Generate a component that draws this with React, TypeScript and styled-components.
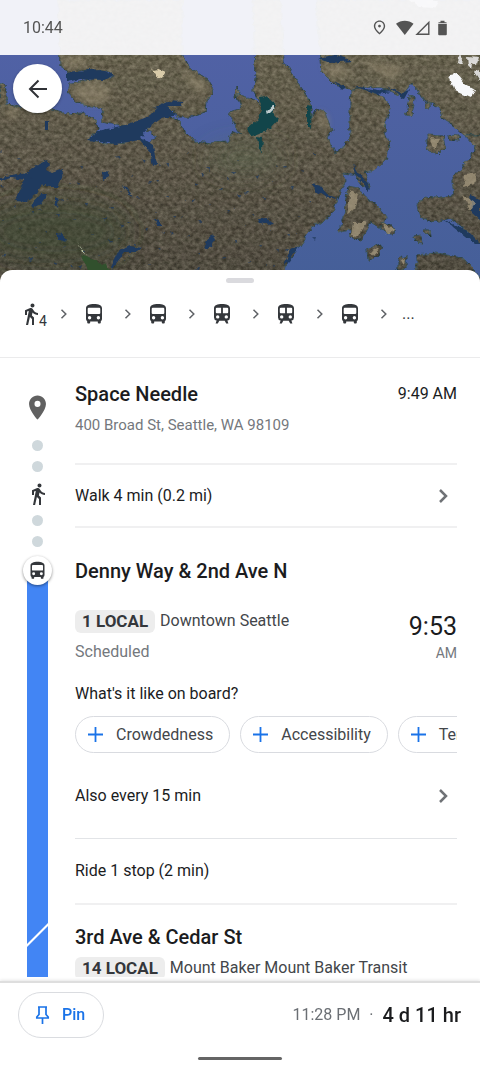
import React from "react";
import styled, { createGlobalStyle } from "styled-components";
import { MdDirectionsWalk, MdPlace, MdOutlinePlace } from "react-icons/md";

const GlobalStyle = createGlobalStyle`
  *, *::before, *::after { box-sizing: border-box; }
  body {
    margin: 0;
    background: #fff;
    color: #1b1c1e;
    font-family: Roboto, "Liberation Sans", sans-serif;
    font-size: 16px;
    line-height: 24px;
  }
  h1, h2, p, ol, ul { margin: 0; padding: 0; list-style: none; font-weight: 400; }
  button { font: inherit; color: inherit; margin: 0; padding: 0; border: 0; background: none; cursor: pointer; }
  svg { display: block; flex: none; }
`;

const Screen = styled.div`
  display: flex;
  flex-direction: column;
  height: 100vh;
  overflow: hidden;
`;

const MapHeader = styled.header`
  position: relative;
  flex: none;
  height: 282px;
  margin-bottom: -12px;
  background: #4c6099;
`;

const MapImage = styled.svg`
  position: absolute;
  inset: 0;
  width: 100%;
  height: 100%;
`;

const StatusBar = styled.div`
  position: relative;
  display: flex;
  align-items: center;
  justify-content: space-between;
  height: 55px;
  padding: 0 30px 0 23px;
  background: rgba(250, 250, 252, 0.95);
  color: #545454;
`;

const StatusIcons = styled.div`
  display: flex;
  align-items: center;
  gap: 8px;
`;

const BackButton = styled.button`
  position: relative;
  display: grid;
  place-items: center;
  width: 49px;
  height: 49px;
  margin: 9px 0 0 13px;
  border-radius: 50%;
  background: #fff;
  color: #303236;
  box-shadow: 0 1px 3px rgba(0, 0, 0, 0.3);
`;

const Sheet = styled.main`
  position: relative;
  display: flex;
  flex-direction: column;
  flex: 1;
  min-height: 0;
  padding-bottom: 4px;
  border-radius: 12px 12px 0 0;
  background: #fff;
`;

const Handle = styled.div`
  flex: none;
  width: 28px;
  height: 5px;
  margin: 8px auto 0;
  border-radius: 3px;
  background: #dadade;
`;

const Steps = styled.ol`
  display: flex;
  flex: none;
  align-items: center;
  height: 75px;
  padding: 0 19px 12px;
  border-bottom: 1px solid #ebebec;
  color: #34373b;
`;

const Step = styled.li`
  display: flex;
  align-items: center;
  justify-content: space-between;
  width: 64px;
  padding-right: 14px;

  &:first-child { width: 63px; }
`;

const WalkStep = styled.span`
  display: flex;
  align-items: flex-end;
  font-size: 14px;
  line-height: 10px;

  svg { margin-right: -4px; }
`;

const Itinerary = styled.div`
  flex: 1;
  min-height: 0;
  overflow-y: auto;
  scrollbar-width: none;
`;

const Leg = styled.section`
  display: grid;
  grid-template-columns: 75px minmax(0, 1fr);
  padding-right: 23px;
`;

const Rail = styled.div<{ $top: number }>`
  display: flex;
  flex-direction: column;
  align-items: center;
  padding-top: ${(p) => p.$top}px;
  color: #34373b;
`;

const PlaceMark = styled.div`
  height: 47px;
  color: #616161;
`;

const Dots = styled.div`
  display: flex;
  flex-direction: column;
  gap: 10px;

  &::before, &::after {
    content: "";
    width: 11px;
    height: 11px;
    border-radius: 50%;
    background: #cfd8dc;
  }
`;

const WalkMark = styled.div`
  padding: 10px 0 9px;
`;

const StopBadge = styled.div`
  position: relative;
  z-index: 1;
  display: grid;
  place-items: center;
  width: 29px;
  height: 29px;
  border-radius: 50%;
  background: #fff;
  box-shadow: 0 1px 3px rgba(0, 0, 0, 0.45);
`;

const RouteLine = styled.div`
  flex: 1;
  width: 21px;
  margin-top: -8px;
  background: #4285f4;
`;

const LineBreak = styled.svg`
  width: 21px;
  height: 24px;
  fill: #4285f4;
`;

const LineEnd = styled.div`
  width: 21px;
  height: 54px;
  background: #4285f4;
`;

const Row = styled.div<{ $height: number; $thin?: boolean }>`
  display: flex;
  align-items: center;
  justify-content: space-between;
  width: 100%;
  height: ${(p) => p.$height}px;
  border-bottom: ${(p) => (p.$thin ? "1px solid #e2e4e7" : "2px solid #f0f0f1")};
`;

const RowButton = styled(Row).attrs({ as: "button", type: "button" })`
  padding-right: 8px;
  text-align: left;
`;

const Origin = styled.div`
  height: 107px;
  padding-top: 22px;
  border-bottom: 2px solid #f0f0f1;
`;

const Line = styled.div`
  display: flex;
  align-items: center;
  justify-content: space-between;
`;

const PlaceName = styled.h2`
  font-size: 20px;
  line-height: 28px;
  font-weight: 500;
`;

const StopHeading = styled(PlaceName)`
  padding-top: 10px;
`;

const Address = styled.p`
  margin-top: 5px;
  font-size: 15px;
  color: #74787d;
`;

const Departure = styled.div`
  display: flex;
  justify-content: space-between;
  padding-top: 24px;
`;

const Service = styled.p`
  display: flex;
  align-items: center;
  gap: 5px;
  color: #43464a;
`;

const RouteTag = styled.strong`
  padding: 0 7px;
  border-radius: 6px;
  background: #ededed;
  color: #34373b;
  font-size: 17px;
  font-weight: 700;
  line-height: 23px;
`;

const Muted = styled.p`
  margin-top: 7px;
  color: #74787d;
`;

const Clock = styled.div`
  padding-top: 4px;
  text-align: right;
  color: #74787d;
  font-size: 14px;
`;

const ClockTime = styled.div`
  color: #1b1c1e;
  font-size: 25px;
  line-height: 28px;
`;

const Question = styled.p`
  margin-top: 17px;
`;

const Chips = styled.ul`
  display: flex;
  gap: 10px;
  margin-top: 10px;
  overflow: hidden;
`;

const Chip = styled.button`
  display: flex;
  align-items: center;
  gap: 12px;
  height: 37px;
  padding: 0 16px 0 11px;
  border: 1px solid #d9dbe0;
  border-radius: 19px;
  color: #43464a;
  white-space: nowrap;
`;

const NextStop = styled.div`
  height: 96px;
  padding-top: 18px;

  ${Service} { margin-top: 5px; }
`;

const Footer = styled.footer`
  position: relative;
  flex: none;
  padding: 9px 19px 0 18px;
  background: #fff;
  border-top: 2px solid #dedede;
  box-shadow: 0 -1px 3px rgba(0, 0, 0, 0.1);
`;

const PinButton = styled.button`
  display: flex;
  align-items: center;
  gap: 11px;
  height: 46px;
  padding: 0 18px 0 15px;
  border: 1px solid #dadce0;
  border-radius: 23px;
  color: #1a73e8;
  font-weight: 500;
`;

const Arrival = styled.p`
  display: flex;
  align-items: center;
  gap: 9px;
  color: #6b6f74;
`;

const Duration = styled.strong`
  color: #1b1c1e;
  font-size: 20px;
  font-weight: 500;
`;

const HomeBar = styled.div`
  width: 84px;
  height: 3px;
  margin: 19px auto 7px;
  border-radius: 2px;
  background: #656565;
`;

type IconProps = { size: number };

const BusIcon = ({ size }: IconProps) => (
  <svg width={size} height={size} viewBox="0 0 24 24" fill="currentColor" fillRule="evenodd" aria-hidden="true">
    <path d="M4 6.300C4 3.300 7.500 2 12 2s8 1.300 8 4.300V17q0 1.500-1.200 2.300v1.200q0 1-1 1h-1q-1 0-1-1v-1H8.200v1q0 1-1 1h-1q-1 0-1-1v-1.200Q4 18.500 4 17zM5.700 6.900V11q0 1.100 1.100 1.100h10.400q1.100 0 1.100-1.100V6.900q0-1.100-1.100-1.100H6.800q-1.100 0-1.100 1.100zM7.600 14a1.700 1.700 0 1 0 0 3.400 1.700 1.700 0 0 0 0-3.400zM16.400 14a1.700 1.700 0 1 0 0 3.400 1.700 1.700 0 0 0 0-3.400z" />
  </svg>
);

const TrainIcon = ({ size }: IconProps) => (
  <svg width={size} height={size} viewBox="0 0 24 24" fill="currentColor" fillRule="evenodd" aria-hidden="true">
    <path d="M4 6.300C4 3.300 7.500 2 12 2s8 1.300 8 4.300V15.500q0 2.600-2.600 3.100l1 2.900h-2.200l-1.500-2.800H9.300l-1.500 2.800H5.600l1-2.900Q4 18.100 4 15.500zM5.800 6.700v3.600q0 1 1 1h4.300V5.700H6.800q-1 0-1 1zM12.900 5.700v5.600h4.300q1 0 1-1V6.700q0-1-1-1zM7.700 13.200a1.700 1.700 0 1 0 0 3.400 1.700 1.700 0 0 0 0-3.400zM16.300 13.200a1.700 1.700 0 1 0 0 3.400 1.700 1.700 0 0 0 0-3.400z" />
  </svg>
);

const SmallChevron = () => (
  <svg width="8" height="12" viewBox="0 0 8 12" fill="none" stroke="#5f6266" strokeWidth="1.5" aria-hidden="true">
    <path d="M1.500 1.800 5.800 6l-4.300 4.200" />
  </svg>
);

const Chevron = () => (
  <svg width="12" height="16" viewBox="0 0 12 16" fill="none" stroke="#6f7276" strokeWidth="2.5" aria-hidden="true">
    <path d="m3 2 6 6-6 6" />
  </svg>
);

const Plus = () => (
  <svg width="17" height="17" viewBox="0 0 17 17" fill="none" stroke="#1a73e8" strokeWidth="1.8" aria-hidden="true">
    <path d="M8.500 1v15M1 8.500h15" />
  </svg>
);

const PushPin = () => (
  <svg width="17" height="20" viewBox="0 0 17 20" fill="none" stroke="currentColor" strokeWidth="1.7" aria-hidden="true">
    <path d="M4 2h9M5 2v7.500L2.800 12v1h11.400v-1L12 9.500V2M8.500 13v6" />
  </svg>
);

const ArrowBack = () => (
  <svg width="24" height="24" viewBox="0 0 24 24" fill="none" stroke="currentColor" strokeWidth="2" aria-hidden="true">
    <path d="M21 12H4.500M12.500 3.500 4 12l8.500 8.500" />
  </svg>
);

const Connectivity = () => (
  <svg width="54" height="16" viewBox="0 0 54 16" fill="#545454" aria-hidden="true">
    <path d="M0 3.800C5-.4 12.500-.4 17.500 3.800L8.800 15z" />
    <path d="M32.800 2.400v11.900H21z" fill="none" stroke="#545454" strokeWidth="1.400" />
    <path d="M44.500.8h4v1.400h1.300q1 0 1 .8H42.200q0-.8 1-.8h1.300zM42.200 3.800h8.600v10.400q0 1-1 1h-6.600q-1 0-1-1z" />
  </svg>
);

const lakes: string[] = [
  "M0 178 12 176 27 173 40 163 47 160 50 164 46 170 52 173 63 169 62 178 57 187 49 187 42 184 37 193 31 198 27 202 14 201 22 187 24 180 12 178 0 181z",
  "M31 205 41 194 47 194 40 204 33 208z",
  "M57 233 62 234 67 240 64 243 57 239z",
  "M111 267 119 251 130 246 142 248 137 252 125 252 118 261 112 269z",
  "M102 173 108 171 108 177 103 180z",
  "M122 185 126 187 134 198 130 195z",
  "M204 243 213 235 215 240 212 247 206 249z",
  "M312 184 320 186 328 195 338 198 327 198 317 192z",
  "M258 219 267 218 274 223 266 224 260 223z",
  "M55 197 59 199 58 207 55 203z",
  "M154 151 157 164 153 166 151 158z",
  "M153 218 158 220 163 226 157 226z",
  "M45 122 48 122 48 130 45 130z",
  "M153 108 168 101 184 102 181 106 166 106z",
];

const speckles = Array.from({ length: 110 }, (_, i) => ({
  x: (i * 97 + (i % 7) * 31) % 320,
  y: 152 + ((i * 53 + (i % 5) * 17) % 116),
  w: 1 + (i % 3),
}));

const SatelliteMap = () => (
  <MapImage viewBox="0 0 480 282" preserveAspectRatio="xMidYMin slice" role="img" aria-label="Satellite map">
    <defs>
      <linearGradient id="sea" x1="0" y1="0" x2="0" y2="1">
        <stop offset="0" stopColor="#5362a8" />
        <stop offset="1" stopColor="#455f98" />
      </linearGradient>
      <linearGradient id="ground" gradientUnits="userSpaceOnUse" x1="0" y1="40" x2="0" y2="270">
        <stop offset="0" stopColor="#6b6651" />
        <stop offset="0.450" stopColor="#5e584a" />
        <stop offset="1" stopColor="#4c473e" />
      </linearGradient>
      <filter id="terrain" x="0" y="0" width="480" height="282" filterUnits="userSpaceOnUse" colorInterpolationFilters="sRGB">
        <feTurbulence type="fractalNoise" baseFrequency="0.150" numOctaves="3" seed="8" result="coast" />
        <feDisplacementMap in="SourceGraphic" in2="coast" scale="6" xChannelSelector="R" yChannelSelector="G" result="land" />
        <feTurbulence type="fractalNoise" baseFrequency="0.220 0.260" numOctaves="4" seed="21" result="noise" />
        <feColorMatrix in="noise" type="matrix" values="1.100 0 0 0 -0.180  1.050 0.050 0 0 -0.200  1 0 0 0 -0.220  0 0 0 0 0.280" result="grain" />
        <feComposite in="grain" in2="land" operator="in" result="texture" />
        <feMerge>
          <feMergeNode in="land" />
          <feMergeNode in="texture" />
        </feMerge>
      </filter>
      <filter id="rugged" x="0" y="0" width="480" height="282" filterUnits="userSpaceOnUse" colorInterpolationFilters="sRGB">
        <feTurbulence type="fractalNoise" baseFrequency="0.150" numOctaves="3" seed="5" />
        <feDisplacementMap in="SourceGraphic" scale="5" xChannelSelector="R" yChannelSelector="G" />
      </filter>
      <filter id="soft" x="-50%" y="-50%" width="200%" height="200%">
        <feGaussianBlur stdDeviation="12" />
      </filter>
      <filter id="hills" x="-20%" y="-20%" width="140%" height="140%">
        <feGaussianBlur stdDeviation="3" />
      </filter>
    </defs>
    <rect width="480" height="282" fill="url(#sea)" />

    <g filter="url(#terrain)" fill="url(#ground)" stroke="#2c4a50" strokeWidth="1">
      <path d="M58 0H182V55L190 68 207 79 214 91 206 101 205 113 193 117 178 117 164 105 152 118 136 124 120 126 103 122 101 110 92 107 77 103 68 93 70 83 95 78 115 77 108 71 90 71 70 73 60 66z" />
      <path d="M0 82 5 85 7 97 5 104 20 107 36 113 50 109 66 114 82 113 96 120 98 129 89 139 105 144 125 142 136 137 148 144 156 137 146 130 148 122 164 115 178 120 185 133 195 141 212 143 228 142 233 132 241 134 233 121 228 112 242 109 236 94 255 100 260 105 254 91 255 78 253 0H280L284 61 293 76 305 93 312 108 311 118 316 108 326 113 332 130 328 138 335 153 343 148 350 135 350 105 351 91 364 88 379 95 391 106 386 118 385 133 390 146 386 160 375 170 365 172 370 188 362 185 353 174 342 173 346 180 338 199 330 217 313 226 304 240 286 265 278 290H-10z" />
      <path d="M316 0H490V135L477 135 462 134 454 127 442 118 440 108 423 99 412 82 402 96 388 90 368 87 352 90 335 85 322 72z" />
      <path d="M465 135H490V250L478 243 466 230 451 218 433 222 420 217 417 206 423 197 435 198 454 195 452 180 460 170 472 156 475 146z" />
      <path d="M348 186 358 188 364 196 377 206 386 218 383 229 371 222 366 232 360 240 350 237 349 229 338 232 344 217 345 204z" />
      <path d="M382 222 397 229 393 235 381 230z M367 249 382 244 379 256 368 260z M398 259 406 256 406 268 398 270z M417 255 436 253 463 258 481 278V290H417z M414 236 422 235 423 243 416 242z M423 230 429 230 430 237z M427 135 443 136 445 147 437 155 427 149z M448 135 458 136 459 141 449 140z M409 96 415 98 412 114 406 115z M425 102 430 103 430 109 425 108z M236 86 240 93 235 99z" />
    </g>

    <g filter="url(#soft)">
      <ellipse cx="55" cy="232" rx="75" ry="32" fill="#34482f" opacity="0.450" />
      <ellipse cx="245" cy="158" rx="38" ry="14" fill="#5c6e54" opacity="0.400" />
    </g>
    <g filter="url(#hills)" fill="#a3967b" opacity="0.450">
      <path d="M72 87 95 81 112 90 104 103 90 105 78 98z M62 57 92 58 80 66 64 66z M180 70 205 82 205 94 192 88z M322 64 342 66 352 76 330 77z M360 60 405 68 390 80z M320 110 328 117 328 132 320 125z M3 108 20 108 12 120z" />
    </g>

    <g filter="url(#rugged)">
      <g fill="#1f3a5e">
        <path d="M67 72 100 69 116 76 103 80 80 79 67 82z" />
        <path d="M98 131 125 125 150 116 163 102 177 115 162 118 148 128 140 137 153 145 155 159 148 150 140 140 115 144 88 140z" />
        {lakes.map((d) => (
          <path key={d} d={d} />
        ))}
        {speckles.map((s, i) => (
          <path key={i} d={`M${s.x} ${s.y}h${s.w + 1}l-1 ${s.w}z`} opacity="0.700" />
        ))}
        <path d="M318 58 335 55 352 61 330 63z M334 81 346 87 342 90z M352 86 378 90 391 92 378 94z M387 86 401 93 409 90 404 99z M359 174 371 188 368 191 360 180z M353 163 362 180 357 178z M443 220 465 229 480 244 475 244 452 226z M470 194 480 200V220L472 213z M284 265 290 250 299 246 289 261z" />
      </g>
      <g fill="#12454a">
        <path d="M259 97 266 96 277 104 272 112 279 118 270 128 260 134 252 137 247 130 258 120 262 110z M307 105 312 106 311 129 307 126z M257 137 263 138 262 152 259 150z" />
      </g>
      <g fill="#a99d82" opacity="0.700">
        <path d="M351 190 358 194 355 207 347 215z M353 222 366 222 358 237 351 236z M383 224 396 230 387 234z M370 253 380 247 375 257z M400 260 404 258 403 266z M463 195 475 203 470 211z M465 175 477 173 475 184 463 187z M430 138 440 139 434 151z" />
      </g>
      <path d="M80 255 88 258 106 264 111 274 91 274z" fill="#31502d" />
    </g>

    <g fill="#f7f8fa" filter="url(#rugged)">
      <path d="M449 75 457 74 465 84 475 90 471 98 455 91z" />
      <path d="M459 56 463 58 462 65 458 63z M467 56 479 57 477 64 472 62 471 70 468 65z M474 72 480 70V81z M410 0H439L434 8 419 7z" opacity="0.800" />
      <path d="M266 111 274 104 275 107 267 115z" opacity="0.750" />
      <path d="M149 68 153 70 158 69 160 71 165 73 162 78 156 77 157 73z" fill="#d9cba9" />
      <path d="M77 242 80 248 86 255 81 252z" fill="#b9c3a3" />
    </g>
  </MapImage>
);

const steps = [
  { label: "Bus", Icon: BusIcon },
  { label: "Bus", Icon: BusIcon },
  { label: "Train", Icon: TrainIcon },
  { label: "Train", Icon: TrainIcon },
  { label: "Bus", Icon: BusIcon },
];

const boardTopics = ["Crowdedness", "Accessibility", "Temperature"];

export default function App() {
  return (
    <Screen>
      <GlobalStyle />
      <MapHeader>
        <SatelliteMap />
        <StatusBar>
          <span>10:44</span>
          <StatusIcons>
            <MdOutlinePlace size={17} />
            <Connectivity />
          </StatusIcons>
        </StatusBar>
        <BackButton type="button" aria-label="Back">
          <ArrowBack />
        </BackButton>
      </MapHeader>

      <Sheet>
        <Handle />
        <Steps>
          <Step>
            <WalkStep>
              <MdDirectionsWalk size={24} aria-label="Walk" />4
            </WalkStep>
            <SmallChevron />
          </Step>
          {steps.map(({ label, Icon }, i) => (
            <Step key={i} aria-label={label}>
              <Icon size={24} />
              <SmallChevron />
            </Step>
          ))}
          <li>...</li>
        </Steps>

        <Itinerary>
          <Leg>
            <Rail $top={35}>
              <PlaceMark>
                <MdPlace size={29} />
              </PlaceMark>
              <Dots />
              <WalkMark>
                <MdDirectionsWalk size={24} />
              </WalkMark>
              <Dots />
            </Rail>
            <div>
              <Origin>
                <Line>
                  <PlaceName>Space Needle</PlaceName>
                  <span>9:49 AM</span>
                </Line>
                <Address>400 Broad St, Seattle, WA 98109</Address>
              </Origin>
              <RowButton $height={63}>
                Walk 4 min (0.2 mi)
                <Chevron />
              </RowButton>
            </div>
          </Leg>

          <Leg>
            <Rail $top={9}>
              <StopBadge>
                <BusIcon size={21} />
              </StopBadge>
              <RouteLine />
              <LineBreak viewBox="0 0 21 24">
                <path d="M0 0h21L0 21zM21 3v21H0z" />
              </LineBreak>
              <LineEnd />
            </Rail>
            <div>
              <StopHeading>Denny Way &amp; 2nd Ave N</StopHeading>
              <Departure>
                <div>
                  <Service>
                    <RouteTag>1 LOCAL</RouteTag> Downtown Seattle
                  </Service>
                  <Muted>Scheduled</Muted>
                </div>
                <Clock>
                  <ClockTime>9:53</ClockTime>
                  AM
                </Clock>
              </Departure>
              <Question>What's it like on board?</Question>
              <Chips>
                {boardTopics.map((name) => (
                  <li key={name}>
                    <Chip type="button">
                      <Plus />
                      {name}
                    </Chip>
                  </li>
                ))}
              </Chips>
              <RowButton $height={86} $thin>
                Also every 15 min
                <Chevron />
              </RowButton>
              <Row $height={66}>Ride 1 stop (2 min)</Row>
              <NextStop>
                <PlaceName>3rd Ave &amp; Cedar St</PlaceName>
                <Service>
                  <RouteTag>14 LOCAL</RouteTag> Mount Baker Mount Baker Transit
                </Service>
              </NextStop>
            </div>
          </Leg>
        </Itinerary>
      </Sheet>

      <Footer>
        <Line>
          <PinButton type="button">
            <PushPin />
            Pin
          </PinButton>
          <Arrival>
            11:28 PM <span>·</span> <Duration>4 d 11 hr</Duration>
          </Arrival>
        </Line>
        <HomeBar />
      </Footer>
    </Screen>
  );
}
